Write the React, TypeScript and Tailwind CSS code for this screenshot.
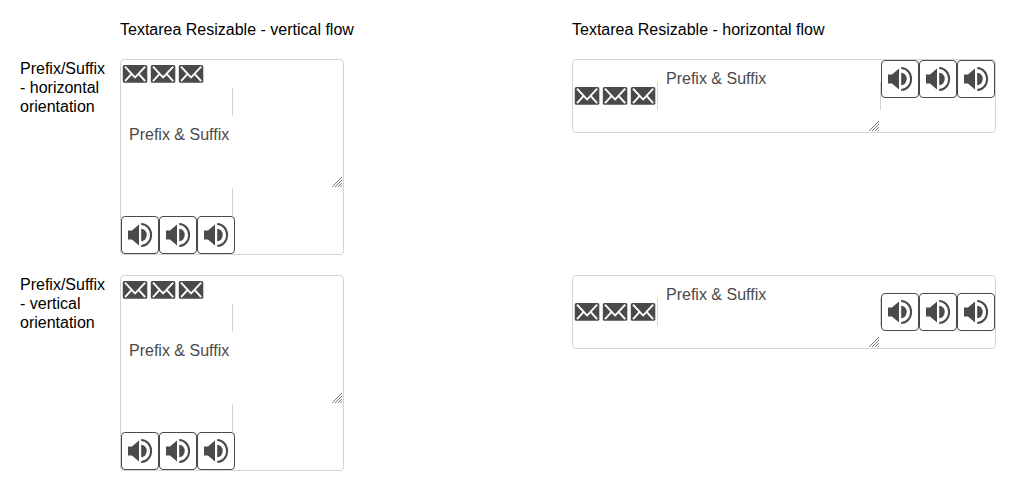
import React from "react";

function MailIcon() {
  return (
    <svg viewBox="0 0 28 28" className="block size-7 shrink-0">
      <rect x="1.8" y="5" width="24.5" height="17.8" rx="1.6" fill="#4a4a4a" />
      <path
        d="M4 6.7 L11.4 14.7 L14.1 17.4 L16.8 14.7 L24.2 6.7 M4 21.2 L10.4 14.2 M24.2 21.2 L17.8 14.2"
        fill="none"
        stroke="#fff"
        strokeWidth="1.9"
      />
    </svg>
  );
}

function VolumeButton() {
  return (
    <button className="flex size-[38px] shrink-0 items-center justify-center rounded border border-[#4a4a4a] bg-white">
      <svg viewBox="0 0 36 36" className="block size-9" fill="#4a4a4a">
        <path d="M6 13.6 H10 L17 7.6 V28.4 L10 22.5 H6 Z" />
        <path d="M19.2 11.8 A5.5 6.2 0 0 1 19.2 24.2 Z" />
        <path d="M19.2 7 A9.9 11 0 0 1 19.2 29" fill="none" stroke="#4a4a4a" strokeWidth="2" />
      </svg>
    </button>
  );
}

function ResizeGrip() {
  return (
    <svg viewBox="0 0 10 10" className="pointer-events-none absolute right-px bottom-px block size-2.5">
      <path
        d="M0 10 L10 0 M3 10 L10 3 M6 10 L10 6 M8.5 10 L10 8.5"
        fill="none"
        stroke="#7d7d7d"
        strokeWidth="1"
      />
    </svg>
  );
}

const Prefix = () => (
  <div className="flex"><MailIcon /><MailIcon /><MailIcon /></div>
);
const Suffix = () => (
  <div className="flex"><VolumeButton /><VolumeButton /><VolumeButton /></div>
);
const Field = () => (
  <div className="relative">
    <textarea
      spellCheck={false}
      defaultValue="Prefix & Suffix"
      className="block h-[72px] w-[222px] resize px-2 py-[9px] text-base leading-[19px] text-[#4a4a4a] outline-none [&::-webkit-resizer]:bg-transparent"
    />
    <ResizeGrip />
  </div>
);
const Separator = () => <div className="h-7 w-px shrink-0 bg-[#d4d4d4]" />;

function VerticalField() {
  return (
    <div className="flex h-[196px] w-56 flex-col rounded border border-[#d4d4d4]">
      <Prefix />
      <div className="pl-[111px]"><Separator /></div>
      <Field />
      <div className="pl-[111px]"><Separator /></div>
      <Suffix />
    </div>
  );
}

function HorizontalField({ centered = false }: { centered?: boolean }) {
  return (
    <div className="flex h-[74px] w-[424px] items-center rounded border border-[#d4d4d4]">
      <Prefix />
      <Separator />
      <Field />
      <Separator />
      <div className={centered ? "self-center" : "self-start"}><Suffix /></div>
    </div>
  );
}

export default function App() {
  return (
    <main className="grid h-[491px] grid-cols-[100px_452px_424px] grid-rows-[39px_216px_196px] content-start bg-white pt-5 pl-5 font-['Liberation_Sans',Arial,sans-serif] text-base leading-[19px] text-black">
      <span />
      <h2>Textarea Resizable - vertical flow</h2>
      <h2>Textarea Resizable - horizontal flow</h2>
      <div className="w-[90px]">Prefix/Suffix - horizontal orientation</div>
      <VerticalField />
      <HorizontalField />
      <div className="w-[90px]">Prefix/Suffix<br />- vertical orientation</div>
      <VerticalField />
      <HorizontalField centered />
    </main>
  );
}
